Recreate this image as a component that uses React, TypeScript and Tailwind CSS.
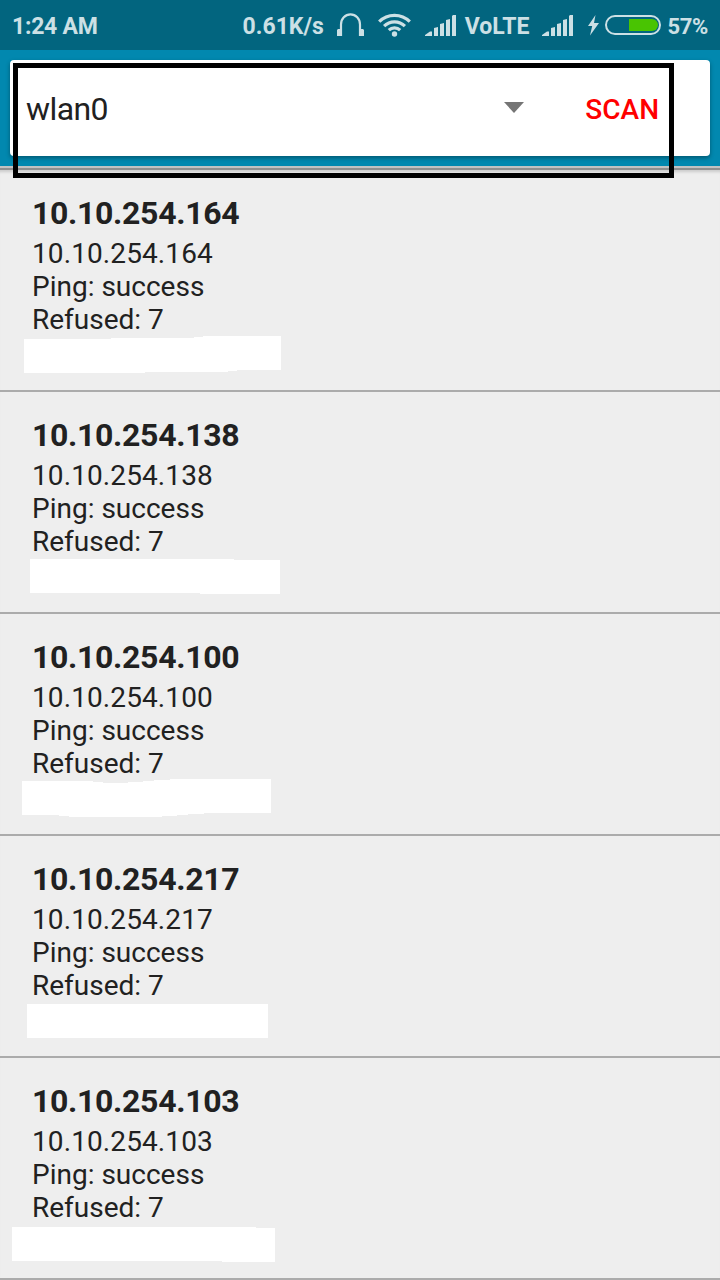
const hosts = [
  { ip: "10.10.254.164", mask: "24,169 111,169 111,168 194,168 194,167 203,167 203,166 281,166 281,200 237,200 237,201 228,201 228,202 145,202 145,203 24,203" },
  { ip: "10.10.254.138", mask: "30,167 234,167 234,168 280,168 280,202 200,202 200,201 30,201" },
  { ip: "10.10.254.100", mask: "22,167 93,167 93,168 103,168 103,169 128,169 128,168 143,168 143,167 154,167 154,166 170,166 170,165 271,165 271,199 204,199 204,200 188,200 188,201 177,201 177,202 162,202 162,203 69,203 69,202 59,202 59,201 22,201" },
  { ip: "10.10.254.217", mask: "27,168 268,168 268,202 27,202" },
  { ip: "10.10.254.103", mask: "12,169 256,169 256,170 275,170 275,204 222,204 222,203 12,203" },
];

function Headphones() {
  return (
    <svg className="-mt-[2px] ml-[13px] shrink-0" width="27" height="24" viewBox="0 0 27 24" fill="none">
      <path d="M4 23V11.5a9.5 10.1 0 0 1 19 0V23" stroke="#cce0e5" strokeWidth="2.2" />
      <path d="M1 16h4v7H0v-6zM22 16h4l1 1v6h-5z" fill="#cce0e5" />
    </svg>
  );
}

function Wifi() {
  return (
    <svg className="-mt-[2px] ml-[14px] shrink-0" width="33" height="24" viewBox="0 0 33 24" fill="none" stroke="#cce0e5" strokeWidth="3.2">
      <path d="M1.2 8.7a21.5 21.5 0 0 1 30.6 0" />
      <path d="M6.1 13.2a14.8 14.8 0 0 1 20.8 0" />
      <path d="M10.8 17.2a8.2 8.2 0 0 1 11.4 0" />
      <circle cx="16.5" cy="21" r="2.7" fill="#cce0e5" stroke="none" />
    </svg>
  );
}

function Signal({ className }: { className: string }) {
  return (
    <svg className={"shrink-0 " + className} width="31" height="21" viewBox="0 0 31 21" fill="#cce0e5">
      <path d="M0 21v-1l5-3.5h2V21zM9 13l4-1v9H9zM15 9l4-1v13h-4zM21 5l4-1v17h-4zM27 1l1-1h3v21h-4z" />
    </svg>
  );
}

function Battery() {
  return (
    <svg className="-mt-[2px] ml-[15px] shrink-0" width="73" height="22" viewBox="0 0 73 22" fill="none">
      <path d="M7.5 1L0 12h4.2L2 21.5 11 9H6z" fill="#cce0e5" />
      <rect x="18" y="2" width="54" height="18" rx="9" stroke="#cce0e5" strokeWidth="2" />
      <path d="M41 5h23a6 6 0 0 1 0 12H41z" fill="#49c402" />
    </svg>
  );
}

function StatusBar() {
  return (
    <div className="flex h-[50px] items-center bg-[#02657f] pr-3 pl-[12px] pt-[2px] text-[23px] font-bold text-[#cce0e5]">
      <span className="mr-auto pt-[3px] tracking-[-0.25px]">1:24 AM</span>
      <span className="pt-[3px]">0.61K/s</span>
      <Headphones />
      <Wifi />
      <Signal className="-mt-px ml-[14px]" />
      <span className="ml-[9px] pt-[3px]">VoLTE</span>
      <Signal className="-mt-px ml-[13px]" />
      <Battery />
      <span className="ml-[6px] text-[22px] tracking-[-0.3px]">57%</span>
    </div>
  );
}

export default function App() {
  return (
    <div className="relative h-[1280px] w-[720px] overflow-hidden whitespace-nowrap bg-[#eeeeee] font-['Roboto',sans-serif] text-[#212121]">
      <StatusBar />
      <header className="h-[116px] bg-[#0288af] px-[10px] pt-[10px]">
        <div className="flex h-24 items-center rounded-[4px] bg-white pr-[51px] pl-4 shadow-[0_2px_4px_rgba(0,0,0,0.35)]">
          <span className="pt-[2px] text-[32px] tracking-[-0.6px]">wlan0</span>
          <svg className="-mt-[2px] mr-[61px] ml-auto" width="20" height="11" viewBox="0 0 20 11">
            <path d="M0 0h20L10 11z" fill="#757575" />
          </svg>
          <button className="pt-[4px] text-[28px] font-medium text-[#ff0000]">SCAN</button>
        </div>
      </header>
      <div className="h-1 border-t-2 border-b-2 border-t-[#c2c2c2] border-b-[#8f8f8f]" />
      <ul className="shadow-[inset_0_4px_3px_-2px_rgba(0,0,0,0.15)]">
        {hosts.map((host) => (
          <li key={host.ip} className="relative h-[222px] border-b-2 border-[#ababab] pt-6 pl-8">
            <h2 className="mb-[5px] text-[32px] leading-[38px] font-bold tracking-[-0.32px]">{host.ip}</h2>
            <div className="text-[28px] leading-[33px]">
              <p className="tracking-[0.1px]">{host.ip}</p>
              <p>Ping: success</p>
              <p>Refused: 7</p>
            </div>
            <svg className="absolute top-0 left-0" width="300" height="210" shapeRendering="crispEdges">
              <polygon points={host.mask} fill="#fff" />
            </svg>
          </li>
        ))}
      </ul>
      <div className="absolute top-[63px] left-[13px] h-[115px] w-[661px] border-[5px] border-black" />
    </div>
  );
}
